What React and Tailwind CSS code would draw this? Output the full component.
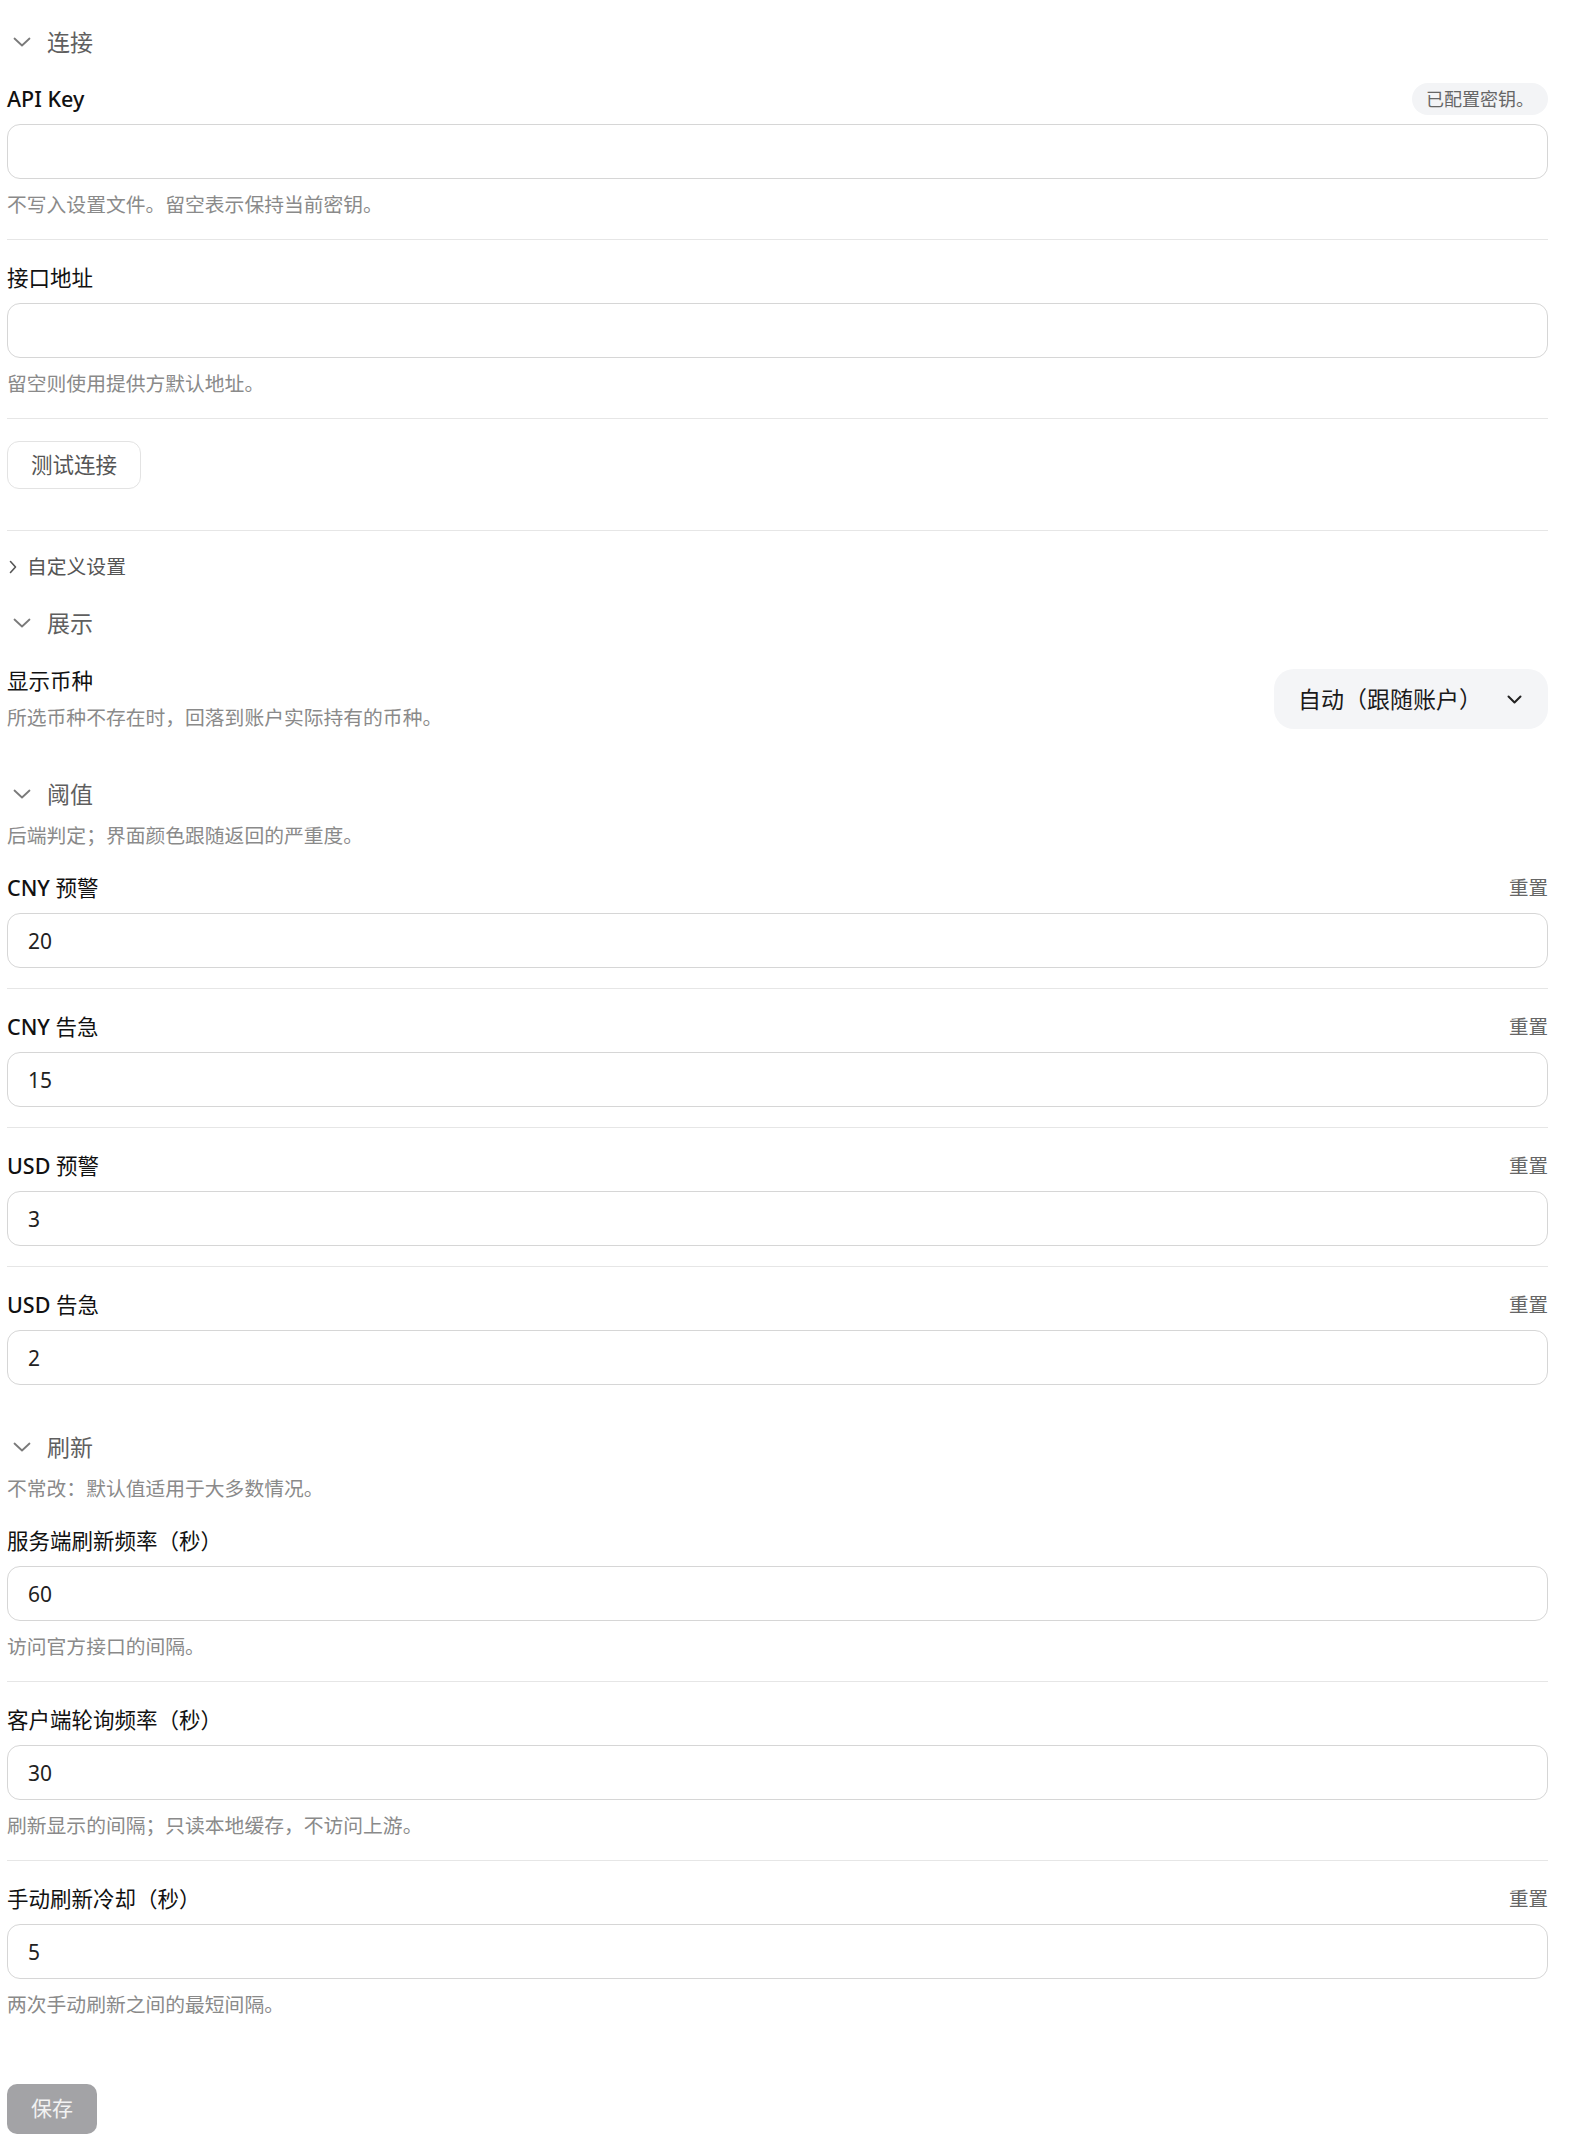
import { useState } from "react";

function ChevronDown({ className = "" }) {
  return (
    <svg width="18" height="10" viewBox="0 0 18 10" fill="none" className={className}>
      <polyline points="1.5,1.5 9,8.5 16.5,1.5" stroke="currentColor" strokeWidth="1.8" strokeLinecap="round" strokeLinejoin="round" />
    </svg>
  );
}

// latin words get a heavier weight, CJK stays regular (like the original font mix)
function LabelText({ text }) {
  return text.split(/([A-Za-z]+(?: [A-Za-z]+)*)/).map((part, i) =>
    /[A-Za-z]/.test(part) ? (
      <span key={i} className="font-medium">{part}</span>
    ) : (
      <span key={i}>{part}</span>
    )
  );
}

function SectionHeading({ title, desc, className = "" }) {
  return (
    <div className={className}>
      <div className="flex items-center h-[32px] pl-[6px] gap-[16px]">
        <ChevronDown className="text-[#7a7a7a]" />
        <span className="text-[23px] text-[#5f5f5f]">{title}</span>
      </div>
      {desc && <p className="mt-[12px] text-[19.8px] leading-[28px] text-[#8a8a8a]">{desc}</p>}
    </div>
  );
}

function Field({ label, value, help, reset, badge, divider = true, pt = "pt-[22px]" }) {
  const [val, setVal] = useState(value || "");
  return (
    <div className={`${pt} pb-[20px] ${divider ? "border-b border-[#e6e6e6]" : ""}`}>
      <div className="flex items-center justify-between h-[32px] mb-[9px]">
        <label className="text-[21.5px] text-[#111]">
          <LabelText text={label} />
        </label>
        {badge && (
          <span className="h-[32px] px-[14px] flex items-center rounded-full bg-[#f3f4f6] text-[18px] text-[#666]">
            {badge}
          </span>
        )}
        {reset && <button className="text-[19.5px] text-[#666]">重置</button>}
      </div>
      <input
        value={val}
        onChange={(e) => setVal(e.target.value)}
        className="w-full h-[55px] rounded-[13px] border border-[#d6d6d6] bg-white px-[20px] text-[21px] text-[#222] outline-none"
      />
      {help && <p className="mt-[12px] text-[19.8px] leading-[28px] text-[#8a8a8a]">{help}</p>}
    </div>
  );
}

export default function App() {
  return (
    <div className="min-h-screen bg-white font-['Noto_Sans','Noto_Sans_CJK_SC',sans-serif]">
      <div className="ml-[7px] w-[1541px] pt-[26px] pb-[10px]">
        {/* 连接 */}
        <SectionHeading title="连接" />
        <Field label="API Key" badge="已配置密钥。" help="不写入设置文件。留空表示保持当前密钥。" pt="pt-[25px]" />
        <Field label="接口地址" help="留空则使用提供方默认地址。" />
        <div className="pt-[22px] pb-[41px] border-b border-[#e6e6e6]">
          <button className="h-[48px] px-[23px] rounded-[12px] border border-[#e3e3e3] bg-white text-[21.5px] text-[#555]">
            测试连接
          </button>
        </div>
        <div className="mt-[22px] flex items-center h-[28px] pl-[2px] gap-[10px]">
          <svg width="8" height="14" viewBox="0 0 8 14" fill="none" className="text-[#555]">
            <polyline points="1.5,1.5 6.5,7 1.5,12.5" stroke="currentColor" strokeWidth="1.6" strokeLinecap="round" strokeLinejoin="round" />
          </svg>
          <span className="text-[19.8px] text-[#555]">自定义设置</span>
        </div>

        {/* 展示 */}
        <SectionHeading title="展示" className="mt-[26px]" />
        <div className="mt-[27px] flex items-center justify-between">
          <div>
            <div className="text-[21.5px] leading-[30px] text-[#111]">显示币种</div>
            <p className="mt-[8px] text-[19.8px] leading-[28px] text-[#8a8a8a]">所选币种不存在时，回落到账户实际持有的币种。</p>
          </div>
          <button className="w-[274px] h-[60px] rounded-[20px] bg-[#f4f5f7] pl-[24px] pr-[26px] flex items-center justify-between text-[23px] text-[#1a1a1a]">
            <span>自动（跟随账户）</span>
            <svg width="15" height="9" viewBox="0 0 15 9" fill="none">
              <polyline points="1.5,1.5 7.5,7.5 13.5,1.5" stroke="#222" strokeWidth="2" strokeLinecap="round" strokeLinejoin="round" />
            </svg>
          </button>
        </div>

        {/* 阈值 */}
        <SectionHeading title="阈值" desc="后端判定；界面颜色跟随返回的严重度。" className="mt-[46px]" />
        <Field label="CNY 预警" value="20" reset />
        <Field label="CNY 告急" value="15" reset />
        <Field label="USD 预警" value="3" reset />
        <Field label="USD 告急" value="2" reset divider={false} />

        {/* 刷新 */}
        <SectionHeading title="刷新" desc="不常改：默认值适用于大多数情况。" className="mt-[26px]" />
        <Field label="服务端刷新频率（秒）" value="60" help="访问官方接口的间隔。" />
        <Field label="客户端轮询频率（秒）" value="30" help="刷新显示的间隔；只读本地缓存，不访问上游。" />
        <Field label="手动刷新冷却（秒）" value="5" reset help="两次手动刷新之间的最短间隔。" divider={false} />

        <button className="mt-[45px] w-[90px] h-[50px] rounded-[10px] bg-[#a3a3a6] text-[21px] text-[#f2f2f2]">
          保存
        </button>
      </div>
    </div>
  );
}
